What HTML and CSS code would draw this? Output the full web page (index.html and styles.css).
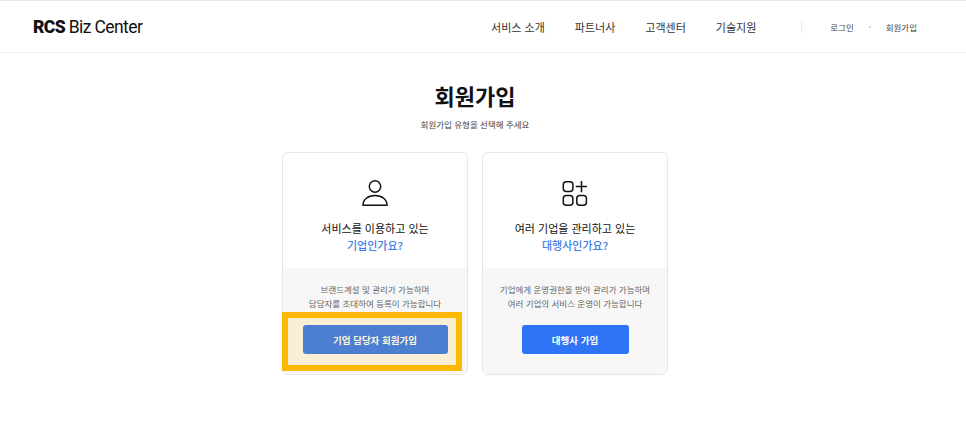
FILE: index.html
```html
<!DOCTYPE html>
<html lang="ko">
<head>
  <meta charset="UTF-8" />
  <meta name="viewport" content="width=device-width, initial-scale=1" />
  <title>RCS Biz Center</title>
  <link rel="stylesheet" href="styles.css">
</head>
<body>
  <header class="header">
    <a class="logo"><b>RCS</b> Biz Center</a>
    <nav class="gnb">
      <a>서비스 소개</a>
      <a>파트너사</a>
      <a>고객센터</a>
      <a>기술지원</a>
    </nav>
    <div class="util">
      <a>로그인</a>
      <span class="dot"></span>
      <a>회원가입</a>
    </div>
  </header>

  <main class="main">
    <h1 class="title">회원가입</h1>
    <p class="sub">회원가입 유형을 선택해 주세요</p>

    <div class="cards">
      <div class="card">
        <div class="card-top">
          <svg class="icon" width="28" height="28" viewBox="0 0 28 28" fill="none" stroke="#111" stroke-width="1.5">
            <circle cx="14" cy="7.5" r="5.7" />
            <path d="M2 26.2C2 20.5 7 16.6 14 16.6S26 20.5 26 26.2Z" />
          </svg>
          <p class="q">서비스를 이용하고 있는<br><span>기업인가요?</span></p>
        </div>
        <div class="card-bottom">
          <p class="desc">브랜드계설 및 관리가 가능하며<br>담당자를 초대하여 등록이 가능합니다</p>
          <button class="btn btn-wide">기업 담당자 회원가입</button>
        </div>
        <div class="highlight"></div>
      </div>

      <div class="card">
        <div class="card-top">
          <svg class="icon" width="28" height="28" viewBox="0 0 28 28" fill="none" stroke="#111" stroke-width="1.5">
            <rect x="2.3" y="2.8" width="9.6" height="9.6" rx="3" />
            <path d="M20.5 2V13.2M14.8 7.6H26" />
            <rect x="2.3" y="16.6" width="9.6" height="9.6" rx="3" />
            <rect x="15.8" y="16.6" width="9.6" height="9.6" rx="3" />
          </svg>
          <p class="q">여러 기업을 관리하고 있는<br><span>대행사인가요?</span></p>
        </div>
        <div class="card-bottom">
          <p class="desc">기업에게 운영권한을 받아 관리가 가능하며<br>여러 기업의 서비스 운영이 가능합니다</p>
          <button class="btn">대행사 가입</button>
        </div>
      </div>
    </div>
  </main>
</body>
</html>
```

FILE: styles.css
```css
* { box-sizing: border-box; }
body {
  margin: 0;
  font-family: 'Noto Sans CJK KR', 'Noto Sans', sans-serif;
  background-color: #fff;
  color: #111;
}
p, h1 { margin: 0; }

.header {
  display: flex;
  align-items: center;
  height: 53px;
  padding: 0 49px 0 33px;
  border-top: 1px solid #e6e6e6;
  border-bottom: 1px solid #ededed;
}
.logo {
  font-family: 'Roboto', sans-serif;
  font-size: 17.5px;
  letter-spacing: -0.6px;
  color: #111;
}
.logo b { font-weight: 900; }
.gnb {
  display: flex;
  gap: 30px;
  margin-left: auto;
  font-size: 11px;
  color: #333;
}
.util {
  display: flex;
  align-items: center;
  gap: 15px;
  height: 12px;
  margin-left: 45px;
  padding-left: 28px;
  font-size: 8.5px;
  color: #444;
  border-left: 1px solid #ececec;
}
.dot {
  width: 2px;
  height: 2px;
  border-radius: 50%;
  background-color: #ccc;
}

.main {
  display: flex;
  flex-direction: column;
  align-items: center;
  padding: 26px 16px 0 0;
}
.title {
  font-size: 22px;
  font-weight: 700;
  line-height: 33px;
  color: #111;
}
.sub {
  margin-top: 6px;
  font-size: 8.5px;
  line-height: 13px;
  color: #444;
}
.cards {
  display: flex;
  gap: 14px;
  margin-top: 21px;
}
.card {
  position: relative;
  width: 186px;
  height: 223px;
  border: 1px solid #e6e6e6;
  border-radius: 6px;
  background-color: #fff;
}
.card-top {
  height: 115px;
  padding-top: 26px;
  text-align: center;
}
.icon { display: block; margin: 0 auto; }
.q {
  margin-top: 13px;
  font-size: 11px;
  line-height: 17px;
  color: #111;
}
.q span { color: #3f7de8; font-weight: 500; }
.card-bottom {
  height: 106px;
  padding-top: 14px;
  text-align: center;
  background-color: #f7f7f7;
  border-radius: 0 0 6px 6px;
}
.desc {
  font-size: 8.5px;
  line-height: 14px;
  color: #666;
}
.btn {
  display: block;
  width: 107px;
  height: 29px;
  margin: 15px auto 0;
  padding: 0;
  font-family: inherit;
  font-size: 9.5px;
  font-weight: 700;
  color: #fff;
  background-color: #2f74f5;
  border: none;
  border-radius: 3px;
}
.btn-wide { width: 145px; }
/* yellow marker drawn over the first button */
.highlight {
  position: absolute;
  left: -1px;
  top: 159px;
  width: 180px;
  height: 59px;
  border: 6px solid #ffb900;
  background-color: rgba(255, 190, 0, 0.14);
}
```
